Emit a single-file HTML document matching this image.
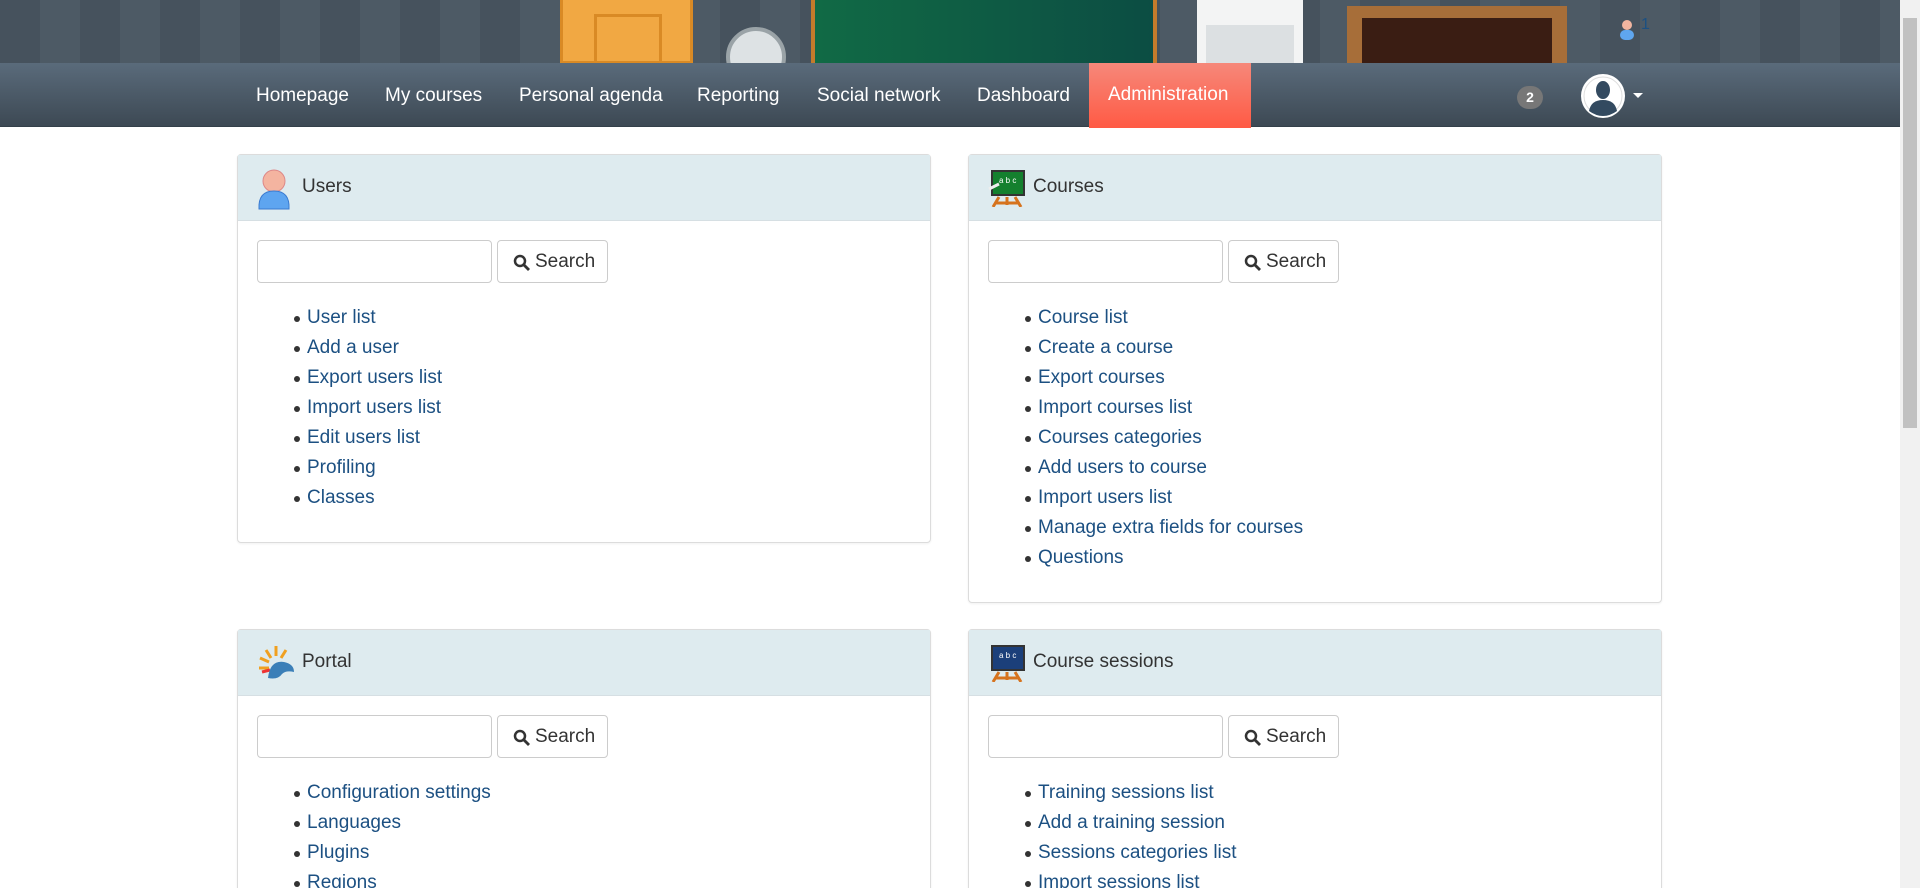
<!DOCTYPE html>
<html><head><meta charset="utf-8"><style>
*{box-sizing:border-box;margin:0;padding:0}
html,body{width:1920px;height:888px;overflow:hidden}
body{background:#fff;font-family:"Liberation Sans",sans-serif;position:relative}
.top{position:absolute;left:0;top:0;width:1900px;height:64px;background:repeating-linear-gradient(90deg,#46525d 0 40px,#4d5a65 40px 80px)}
.nav{position:absolute;left:0;top:63px;width:1900px;height:64px;background:linear-gradient(#5a6b7b,#3d4954);border-bottom:1px solid #34404a}
.nav a{position:absolute;top:1px;height:64px;line-height:64px;color:#fff;font-size:19px;text-decoration:none}
.adm{background:linear-gradient(#f6887a,#ff5a44);padding:0 19px;top:0!important;height:65px!important}
.sb{position:absolute;right:0;top:0;width:20px;height:888px;background:#f1f1f1}
.sb div{position:absolute;left:3px;top:18px;width:14px;height:410px;background:#c1c1c1}
.panel{position:absolute;border:1px solid #dcdcdc;border-radius:4px;background:#fff;box-shadow:0 1px 2px rgba(0,0,0,.06)}
.ph{height:66px;background:#deebef;border-bottom:1px solid #d6dfe3;font-size:19px;color:#333;line-height:64px;padding-left:64px;position:relative}
.ph svg{position:absolute;left:18px;top:12px}
.inp{position:absolute;left:19px;top:85px;width:235px;height:43px;border:1px solid #ccc;border-radius:4px}
.btn{position:absolute;left:259px;top:85px;width:111px;height:43px;border:1px solid #ccc;border-radius:4px;font-size:19px;color:#333;line-height:42px;padding-left:37px}
.btn svg{position:absolute;left:15px;top:13px}
ul{position:absolute;left:69px;top:148px;list-style:none}
li{font-size:19px;line-height:30px;color:#1c5082;position:relative}
li:before{content:"";position:absolute;left:-13px;top:13px;width:6px;height:6px;border-radius:50%;background:#333}
</style></head><body>
<div class="top">
 <div style="position:absolute;left:560px;top:0;width:133px;height:64px;background:#f1a843;border:3px solid #d98a25;border-top:0"></div>
 <div style="position:absolute;left:594px;top:14px;width:68px;height:50px;border:3px solid #d98a25;border-bottom:0"></div>
 <div style="position:absolute;left:726px;top:27px;width:60px;height:60px;border-radius:50%;background:#dde2e4;border:4px solid #9aa3a7"></div>
 <div style="position:absolute;left:811px;top:0;width:346px;height:64px;background:linear-gradient(90deg,#116a45,#0c4d43);border:4px solid #c57b2b;border-top:0;border-bottom:0"></div>
 <div style="position:absolute;left:1197px;top:0;width:106px;height:64px;background:#f3f4f4"></div>
 <div style="position:absolute;left:1206px;top:25px;width:88px;height:39px;background:#dce0e2"></div>
 <div style="position:absolute;left:1347px;top:6px;width:220px;height:58px;background:#a76e39"></div>
 <div style="position:absolute;left:1362px;top:18px;width:190px;height:46px;background:#3a1d13"></div>
 <svg style="position:absolute;left:1617px;top:18px" width="20" height="24"><circle cx="10" cy="7" r="5" fill="#f1b5a0"/><rect x="3" y="12" width="14" height="10" rx="5" fill="#5fa6ef"/></svg>
 <span style="position:absolute;left:1641px;top:16px;color:#1c5082;font-size:16px">1</span>
</div>
<div class="nav">
 <a style="left:256px">Homepage</a>
 <a style="left:385px">My courses</a>
 <a style="left:519px">Personal agenda</a>
 <a style="left:697px">Reporting</a>
 <a style="left:817px">Social network</a>
 <a style="left:977px">Dashboard</a>
 <a class="adm" style="left:1089px;width:162px">Administration</a>
 <div style="position:absolute;left:1517px;top:23px;width:26px;height:23px;border-radius:12px;background:#777;color:#fff;font-size:14px;font-weight:bold;text-align:center;line-height:23px">2</div>
 <svg style="position:absolute;left:1580px;top:10px" width="46" height="46"><circle cx="23" cy="23" r="22" fill="#fff"/><circle cx="23" cy="23" r="19" fill="#fff" stroke="#ddd"/><ellipse cx="23" cy="17" rx="7" ry="9" fill="#334a60"/><path d="M9 38 Q11 27 23 27 Q35 27 37 38 Q30 43 23 43 Q16 43 9 38Z" fill="#334a60"/></svg>
 <div style="position:absolute;left:1633px;top:30px;border:5px solid transparent;border-top:5px solid #fff"></div>
</div>
<div class="sb"><div></div></div>

<div class="panel" style="left:237px;top:154px;width:694px;height:389px">
 <div class="ph"><svg width="36" height="44"><circle cx="18" cy="14" r="11" fill="#f4b4a0" stroke="#d88" /><path d="M3 42 Q2 24 18 24 Q34 24 33 42Z" fill="#5ea5f0" stroke="#3b7bd0"/></svg>Users</div>
 <div class="inp"></div><div class="btn"><svg width="17" height="17"><circle cx="7" cy="7" r="5" fill="none" stroke="#333" stroke-width="2.5"/><path d="M11 11l5 5" stroke="#333" stroke-width="2.8"/></svg>Search</div>
 <ul><li>User list</li><li>Add a user</li><li>Export users list</li><li>Import users list</li><li>Edit users list</li><li>Profiling</li><li>Classes</li></ul>
</div>
<div class="panel" style="left:968px;top:154px;width:694px;height:449px">
 <div class="ph"><svg width="40" height="40"><path d="M12 30l-6 10M28 30l6 10M20 30v8M8 36h24" stroke="#d6731e" stroke-width="3"/><rect x="5" y="4" width="32" height="24" fill="#14802e" stroke="#333" stroke-width="2"/><text x="12" y="16" font-size="8" fill="#fff" font-family="Liberation Sans">a b c</text><path d="M2 22l10-5" stroke="#eee" stroke-width="3"/></svg>Courses</div>
 <div class="inp"></div><div class="btn"><svg width="17" height="17"><circle cx="7" cy="7" r="5" fill="none" stroke="#333" stroke-width="2.5"/><path d="M11 11l5 5" stroke="#333" stroke-width="2.8"/></svg>Search</div>
 <ul><li>Course list</li><li>Create a course</li><li>Export courses</li><li>Import courses list</li><li>Courses categories</li><li>Add users to course</li><li>Import users list</li><li>Manage extra fields for courses</li><li>Questions</li></ul>
</div>
<div class="panel" style="left:237px;top:629px;width:694px;height:300px">
 <div class="ph"><svg width="40" height="40"><path d="M20 4v10M10 8l5 8M4 16l9 4M3 26h10M30 8l-5 8" stroke="#f0a020" stroke-width="3"/><path d="M6 30l8-2" stroke="#e33" stroke-width="3"/><path d="M12 36 Q14 18 28 20 Q38 22 38 30 Q30 28 26 32 Q22 38 12 36Z" fill="#3b7fb8"/></svg>Portal</div>
 <div class="inp"></div><div class="btn"><svg width="17" height="17"><circle cx="7" cy="7" r="5" fill="none" stroke="#333" stroke-width="2.5"/><path d="M11 11l5 5" stroke="#333" stroke-width="2.8"/></svg>Search</div>
 <ul><li>Configuration settings</li><li>Languages</li><li>Plugins</li><li>Regions</li></ul>
</div>
<div class="panel" style="left:968px;top:629px;width:694px;height:300px">
 <div class="ph"><svg width="40" height="40"><path d="M12 30l-6 10M28 30l6 10M20 30v8M8 36h24" stroke="#d6731e" stroke-width="3"/><rect x="5" y="4" width="32" height="24" fill="#1b3f7a" stroke="#333" stroke-width="2"/><text x="12" y="16" font-size="8" fill="#fff" font-family="Liberation Sans">a b c</text></svg>Course sessions</div>
 <div class="inp"></div><div class="btn"><svg width="17" height="17"><circle cx="7" cy="7" r="5" fill="none" stroke="#333" stroke-width="2.5"/><path d="M11 11l5 5" stroke="#333" stroke-width="2.8"/></svg>Search</div>
 <ul><li>Training sessions list</li><li>Add a training session</li><li>Sessions categories list</li><li>Import sessions list</li></ul>
</div>
</body></html>
